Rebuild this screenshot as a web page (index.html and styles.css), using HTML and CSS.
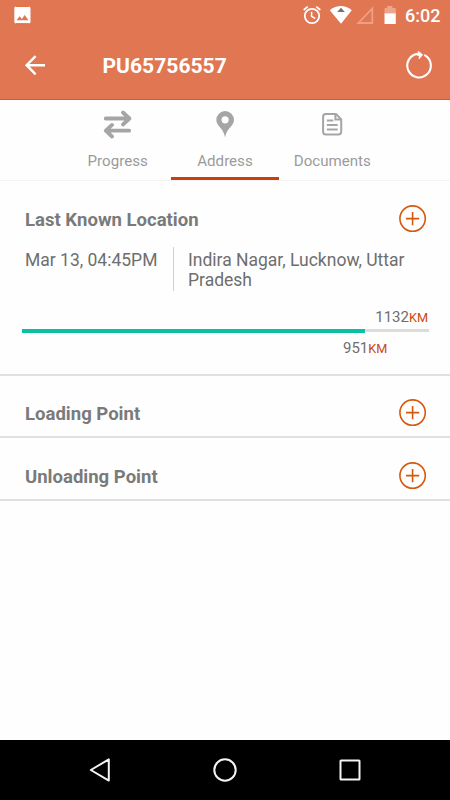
FILE: index.html
```html
<!DOCTYPE html>
<html lang="en">
<head>
<meta charset="utf-8">
<title>PU65756557</title>
<link rel="stylesheet" href="styles.css">
</head>
<body>
<div class="screen">
  <header class="header">
    <div class="status">
      <svg class="picture" width="18" height="20" viewBox="0 0 18 20"><rect x="1.3" y="1.6" width="16.2" height="17" rx="1.8" fill="#fff"/><path d="M3 1.5h12.8M3 18.7h12.8" stroke="#e05f20" stroke-width=".8"/><path d="M3.5 15.3l3.2-4 2.2 2.6 2.8-3.8 3.8 5.2z" fill="#e17653"/></svg>
      <svg class="alarm" width="20" height="20" viewBox="0 0 20 20" fill="none" stroke="#fff"><circle cx="10" cy="11" r="7.2" stroke-width="1.8"/><path d="M9.6 6.7v4.6l3.6 2.2" stroke-width="1.5"/><path d="M1.7 5l4-3.4M18.3 5l-4-3.4" stroke-width="1.8"/></svg>
      <svg class="wifi" width="24" height="20" viewBox="0 0 24 20"><path d="M.8 5.2Q12-3 22.8 5.2L12 18.7z" fill="#fff"/><path d="M12 2.8l3.8 4.2H8.2z" fill="#77706d"/></svg>
      <svg class="signal" width="20" height="20" viewBox="0 0 20 20"><path d="M2.4 18L16.3 3.4V18z" fill="none" stroke="#eda087" stroke-width="1.8"/></svg>
      <svg class="battery" width="14" height="20" viewBox="0 0 14 20"><path d="M1.5 4q0-1 1-1h1.7V1h5.2v2h2.4q1 0 1 1v5H1.5z" fill="#eda58d"/><path d="M1.5 8.4h11.3V19H1.5z" fill="#fff"/></svg>
      <span class="time">6:02</span>
    </div>
    <div class="appbar">
      <svg class="back" width="22" height="22" viewBox="0 0 22 22" fill="none" stroke="#fff" stroke-width="2.4"><path d="M21 10.2H3M11.6 1.2L2.6 10.2l9 9.1"/></svg>
      <h1 class="title">PU65756557</h1>
      <svg class="refresh" width="30" height="30" viewBox="0 0 30 30"><path d="M13.6 2.9A11.8 11.8 0 1 0 21 4.4" fill="none" stroke="#fff" stroke-width="2.1" stroke-linecap="round"/><path d="M14.2 .3l4.5 3.4-3.7 4.2.4-3.2-2.4-.5V2.4h1.5z" fill="#fff" stroke="#fff" stroke-width=".7"/></svg>
    </div>
  </header>

  <nav class="tabs">
    <div class="tab">
      <svg width="30" height="30" viewBox="0 0 30 30" fill="none" stroke="#a5a5a5" stroke-width="3.8" stroke-linecap="round" stroke-linejoin="round"><path d="M2.7 9.5H26M20 3.5l6.4 6-6.4 6M26.2 21.7H3M9 15.9L2.8 21.7l6.2 5.8"/></svg>
      <span class="label">Progress</span>
    </div>
    <div class="tab active">
      <svg width="30" height="30" viewBox="0 0 30 30"><path fill-rule="evenodd" d="M15.1 2A9 9 0 0 0 6.3 11C6.3 17 13.5 19 15.1 28.5 16.7 19 24 17 24 11A9 9 0 0 0 15.1 2zm0 5.2a3.6 3.6 0 1 1 0 7.2 3.6 3.6 0 0 1 0-7.2z" fill="#a5a5a5"/></svg>
      <span class="label">Address</span>
    </div>
    <div class="tab">
      <svg width="30" height="30" viewBox="0 0 30 30" fill="none" stroke="#a5a5a5" stroke-width="2"><path d="M8.8 5h10.2l5.2 5.3v12.4q0 2.7-2.7 2.7H8.8q-2.7 0-2.7-2.7v-15q0-2.7 2.7-2.7z"/><path d="M18.4 5v5.5h5.5M9.9 11.4h6.4M9.9 15.9h10.8M9.9 20.4h10.8"/></svg>
      <span class="label">Documents</span>
    </div>
  </nav>

  <main>
    <section class="card location">
      <div class="row">
        <h2>Last Known Location</h2>
        <svg class="plus" width="30" height="30" viewBox="0 0 30 30"><circle cx="14.6" cy="14.6" r="12.7"/><path d="M8 14.6h13.2M14.6 8v13.2"/></svg>
      </div>
      <div class="details">
        <time class="when">Mar 13, 04:45PM</time>
        <p class="place">Indira Nagar, Lucknow, Uttar<br>Pradesh</p>
      </div>
      <div class="distance total">1132<span class="unit">KM</span></div>
      <div class="track"><div class="bar"></div></div>
      <div class="distance done">951<span class="unit">KM</span></div>
    </section>
    <section class="card point">
      <div class="row">
        <h2>Loading Point</h2>
        <svg class="plus" width="30" height="30" viewBox="0 0 30 30"><circle cx="14.6" cy="14.6" r="12.7"/><path d="M8 14.6h13.2M14.6 8v13.2"/></svg>
      </div>
    </section>
    <section class="card point">
      <div class="row">
        <h2>Unloading Point</h2>
        <svg class="plus" width="30" height="30" viewBox="0 0 30 30"><circle cx="14.6" cy="14.6" r="12.7"/><path d="M8 14.6h13.2M14.6 8v13.2"/></svg>
      </div>
    </section>
  </main>

  <footer class="navbar">
    <svg width="30" height="30" viewBox="0 0 30 30"><path d="M5.8 15L23.8 4.4v21.2z"/></svg>
    <svg width="30" height="30" viewBox="0 0 30 30"><circle cx="15" cy="15" r="10.7"/></svg>
    <svg width="30" height="30" viewBox="0 0 30 30"><rect x="5.5" y="5.5" width="19" height="19" rx=".5"/></svg>
  </footer>
</div>
</body>
</html>
```

FILE: styles.css
```css
* { box-sizing: border-box; }
body { margin: 0; font-family: Roboto, "Liberation Sans", sans-serif; background: #fefefe; color: #6e6e6e; }
h1, h2, p { margin: 0; }
svg { display: block; flex: none; }
.screen { width: 450px; height: 800px; display: flex; flex-direction: column; }

.header { height: 100px; background: #e17653; border-bottom: 1px solid #dc5a1c; color: #fff; }
.status { height: 30px; display: flex; align-items: center; padding-left: 13px; }
.picture { margin-right: 271px; }
.wifi { margin-left: 7px; }
.signal { margin-left: 3px; }
.battery { margin-left: 7px; }
.time { margin-left: 8px; font-size: 18px; font-weight: 500; line-height: 30px; padding-top: 1px; white-space: nowrap; }
.appbar { height: 70px; display: flex; align-items: center; padding: 1px 16px 0 24px; }
.title { margin-left: 56.5px; flex: 1; font-size: 21.1px; font-weight: 700; line-height: 28px; }

.tabs { height: 81px; display: flex; padding: 0 64px; border-bottom: 1px solid #f3f3f3; }
.tab { flex: 1; height: 80px; display: flex; flex-direction: column; align-items: center; padding-top: 9px; border-bottom: 3px solid transparent; }
.tab.active { border-bottom-color: #cb3f0c; }
.label { margin-top: 12px; font-size: 15.1px; line-height: 20px; color: #9b9b9b; white-space: nowrap; }

.card { border-bottom: 2px solid #e0e0e0; padding: 0 22px 0 25px; }
.row { display: flex; justify-content: space-between; align-items: center; height: 30px; }
h2 { padding-top: 2px; font-size: 18.55px; font-weight: 700; line-height: 22px; color: #7a7a7a; }
.plus { fill: none; stroke: #d4590e; stroke-width: 1.6; }
.location { height: 195px; padding-top: 23px; }
.details { display: flex; margin-top: 13px; height: 44px; font-size: 17.5px; line-height: 20.5px; white-space: nowrap; }
.when { width: 149px; padding-top: 2.5px; border-right: 1px solid #e0c8c5; }
.place { padding: 2.5px 0 0 14px; }
.distance { font-size: 15px; line-height: 18px; }
.unit { font-size: 12.7px; color: #cb470f; }
.total { margin-top: 17px; text-align: right; }
.track { height: 3px; margin: 2px -1px 0 -3px; background: #dcdcdc; }
.bar { width: 84.2%; height: 3.5px; background: #0bbfa3; }
.done { margin: 7px 0 0 318px; }
.point { height: 62px; padding-top: 22px; }
.point + .point { height: 63px; padding-top: 23px; }

.navbar { margin-top: auto; height: 60px; background: #000; display: flex; gap: 95px; align-items: center; justify-content: center; }
.navbar svg { fill: none; stroke: #f4f4f4; stroke-width: 2; stroke-linejoin: round; }
```
